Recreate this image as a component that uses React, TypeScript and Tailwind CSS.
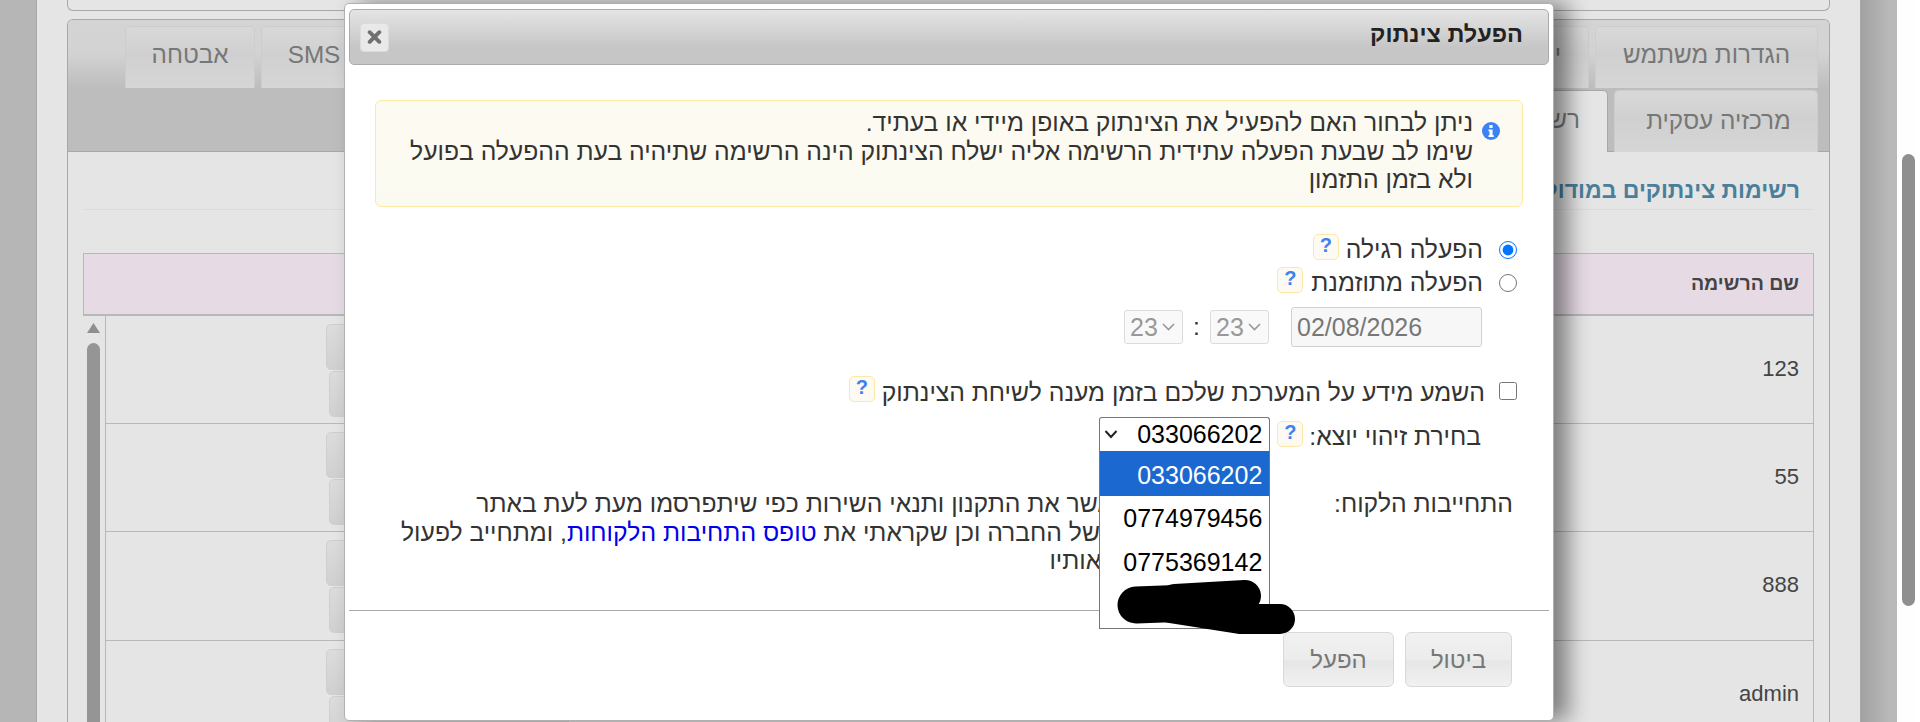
import React from "react";

const tabCls =
  "shrink-0 rounded-t-[5px] border border-b-0 border-[#cdcdcd] bg-[linear-gradient(#d8d8d8,#d0d0d0_45%,#d6d6d6)] text-[#777] text-[24.3px] flex items-center justify-center";

function Help({ className = "" }: { className?: string }) {
  return (
    <span
      className={
        "shrink-0 w-[26px] h-[26px] rounded-[5px] border border-[#fbe9a4] bg-[#fcfaf2] flex items-start justify-center text-[#3c82f0] text-[20px] font-bold leading-[21px] " +
        className
      }
    >
      ?
    </span>
  );
}

function RowButtons() {
  return (
    <div className="w-[240px] flex flex-col items-start gap-[1px] pt-[8px]">
      <div className="w-[240px] h-[46px] rounded-[5px] border border-[#cfcfcf] bg-[linear-gradient(#dcdcdc,#d0d0d0)]" />
      <div className="ml-[3px] w-[240px] h-[46px] rounded-[5px] border border-[#cfcfcf] bg-[linear-gradient(#dcdcdc,#d0d0d0)]" />
    </div>
  );
}

function TableRow({ name, h }: { name: string; h: string }) {
  return (
    <div className={"flex border-b border-[#b8b8b8] " + h} dir="ltr">
      <div className="flex-1 pl-[220px]">
        <RowButtons />
      </div>
      <div className="w-[200px] pr-[14px] text-right text-[22px] text-[#444] flex items-center justify-end pb-[3px]">
        {name}
      </div>
    </div>
  );
}

function Background() {
  return (
    <div className="w-[1897px] h-full bg-[linear-gradient(90deg,#b6b6b6_0,#b6b6b6_1861px,#a2a2a2_1861px,#b9b9b9_1890px)] pl-[36px] pr-[36px] shrink-0">
      <div className="w-[1825px] h-full border-x border-[#a8a8a8] bg-[#e5e5e5] pl-[30px] pr-[30px]">
        <div className="h-[11px] rounded-b-[6px] border border-t-0 border-[#a8a8a8]" />
        <div className="mt-[8px] h-[703px] rounded-t-[6px] border border-b-0 border-[#a8a8a8] overflow-hidden" dir="rtl">
          <div className="h-[132px] border-b border-[#a8a8a8] bg-[linear-gradient(#d4d4d4,#d3d3d3_25%,#bdbdbd_52%,#bdbdbd)] pr-[11px] pt-[6px]">
            <div className="flex gap-[6px] h-[62px]">
              <div className={tabCls + " w-[223px] pb-[4px]"}>הגדרות משתמש</div>
              <div className={tabCls + " w-[230px] pb-[4px] justify-start pr-[27px]"}>יומן</div>
              <div className={tabCls + " w-[980px] pb-[4px]"}></div>
              <div className={tabCls + " w-[106px] pb-[4px]"}>SMS</div>
              <div className={tabCls + " w-[130px] pb-[4px]"}>אבטחה</div>
            </div>
            <div className="flex gap-[6px] h-[62px] mt-[2px]">
              <div className={tabCls + " w-[204px] pl-[5px]"}>מרכזיה עסקית</div>
              <div className="w-[300px] h-[62px] rounded-t-[5px] border border-b-0 border-[#a8a8a8] bg-[#e5e5e5] text-[#777] text-[24.3px] flex items-center pr-[27px] pb-[3px]">
                רשימות צינתוקים
              </div>
            </div>
          </div>
          <div className="px-[15px]">
            <div className="h-[58px] border-b border-[#dedfc8] flex items-center pr-[14px] pt-[20px] text-[#4a7f9b] text-[23px] font-bold">
              רשימות צינתוקים במודול
            </div>
            <div className="mt-[43px] h-[63px] border border-b-2 border-[#b8b8b8] bg-[#e6dbe5] flex items-center pr-[14px] text-[#444] text-[19.5px] font-bold">
              שם הרשימה
            </div>
            <div className="flex">
              <div className="flex-1 border-x border-[#b8b8b8] ml-[22px]">
                <TableRow name="123" h="h-[108px]" />
                <TableRow name="55" h="h-[108px]" />
                <TableRow name="888" h="h-[109px]" />
                <TableRow name="admin" h="h-[108px]" />
              </div>
              <div className="absolute left-[87px] top-[316px] w-[13px] h-[406px] flex flex-col items-center">
                <svg width="13" height="12" viewBox="0 0 13 12" className="mt-[6px]">
                  <path d="M6.5 1 L13 11 L0 11 Z" fill="#8f8f8f" strokeLinejoin="round" />
                </svg>
                <div className="mt-[9px] w-[13px] flex-1 rounded-t-[7px] bg-[#959595]" />
              </div>
            </div>
          </div>
        </div>
      </div>
    </div>
  );
}

function Modal() {
  return (
    <div
      dir="rtl"
      className="absolute left-[344px] top-[3px] w-[1210px] h-[718px] rounded-[5px] bg-white border border-[#b0b0b0] shadow-[14px_0_22px_rgba(0,0,0,0.45)] px-[4px] pt-[5px] text-[24.7px] text-[#333]"
    >
      <div className="h-[56px] rounded-[5px] border border-[#ababab] bg-[linear-gradient(#e4e4e4,#c6c6c6_70%,#c6c6c6)] flex items-center justify-between pr-[25px] pl-[10px] pb-[4px]">
        <span className="font-bold text-[#222] text-[23.5px]">הפעלת צינתוק</span>
        <span className="w-[29px] h-[29px] rounded-[4px] bg-[#e9e9e9] border border-[#dcdcdc] flex items-center justify-center mt-[4px]">
          <svg width="15" height="16" viewBox="0 0 14 14">
            <path d="M2.5 2.5 L11.5 11.5 M11.5 2.5 L2.5 11.5" stroke="#707070" strokeWidth="3.6" strokeLinecap="round" />
          </svg>
        </span>
      </div>

      <div className="mt-[35px] mx-[26px] h-[107px] rounded-[6px] border border-[#fcea9f] bg-[linear-gradient(#fdfaf1,#fbfaf2)] flex items-start pr-[22px] pt-[8px] leading-[28.5px]">
        <svg width="18" height="18" viewBox="0 0 18 18" className="shrink-0 mt-[13px]">
          <circle cx="9" cy="9" r="9" fill="#3b82f6" />
          <rect x="7.4" y="3" width="3.2" height="3" fill="#fff" />
          <path d="M6.5 7.5 H10.6 V13.2 H11.8 V15 H6.5 V13.2 H7.5 V9.2 H6.5 Z" fill="#fff" />
        </svg>
        <div className="mr-[9px]">
          ניתן לבחור האם להפעיל את הצינתוק באופן מיידי או בעתיד.
          <br />
          שימו לב שבעת הפעלה עתידית הרשימה אליה ישלח הצינתוק הינה הרשימה שתיהיה בעת ההפעלה בפועל
          <br />
          ולא בזמן התזמון
        </div>
      </div>

      <div className="mr-[32px] mt-[26px]">
        <div className="h-[33px] flex items-center">
          <input type="radio" readOnly checked className="w-[18px] h-[18px] m-0 accent-[#0075ff]" />
          <span className="mr-[16px]">הפעלה רגילה</span>
          <Help className="mr-[7px] -mt-[5px]" />
        </div>
        <div className="h-[33px] flex items-center">
          <input type="radio" readOnly checked={false} className="w-[18px] h-[18px] m-0" />
          <span className="mr-[16px]">הפעלה מתוזמנת</span>
          <Help className="mr-[8px] -mt-[5px]" />
        </div>
        <div className="mt-[8px] h-[40px] mr-[35px] flex items-center text-[#777]">
          <div dir="ltr" className="w-[191px] h-[40px] rounded-[3px] border border-[#d0d0d0] bg-[#f7f7f7] text-[25px] pl-[5px] leading-[38px]">
            02/08/2026
          </div>
          <div className="mr-[22px] w-[59px] h-[34px] rounded-[3px] border border-[#dcdcdc] bg-[#f9f9f9] text-[25px] text-[#999] flex items-center justify-between pl-[5px] pr-[7px] leading-none" dir="ltr">
            23
            <svg width="13" height="8" viewBox="0 0 13 8"><path d="M1 1 L6.5 6.5 L12 1" fill="none" stroke="#999" strokeWidth="1.6" /></svg>
          </div>
          <span className="w-[27px] text-center text-[#333]">:</span>
          <div className="w-[59px] h-[34px] rounded-[3px] border border-[#dcdcdc] bg-[#f9f9f9] text-[25px] text-[#999] flex items-center justify-between pl-[5px] pr-[7px] leading-none" dir="ltr">
            23
            <svg width="13" height="8" viewBox="0 0 13 8"><path d="M1 1 L6.5 6.5 L12 1" fill="none" stroke="#999" strokeWidth="1.6" /></svg>
          </div>
        </div>

        <div className="mt-[27px] h-[34px] flex items-center">
          <input type="checkbox" readOnly className="w-[18px] h-[18px] m-0" />
          <span className="mr-[14px] pt-[3px]">השמע מידע על המערכת שלכם בזמן מענה לשיחת הצינתוק</span>
          <Help className="mr-[7px] -mt-[5px]" />
        </div>

        <div className="mt-[9px] h-[34px] flex items-center">
          <span className="mr-[36px] pt-[6px]">בחירת זיהוי יוצא:</span>
          <Help className="mr-[6px] -mt-[1px]" />
          <div className="relative mr-[7px] w-[171px] h-[34px] rounded-t-[3px] border border-b-0 border-[#767676] bg-white text-[25px] text-black" dir="ltr">
            <div className="h-full flex items-center justify-between pl-[4px] pr-[7px] leading-none">
              <svg width="14" height="9" viewBox="0 0 14 9"><path d="M1.5 1 L7 7 L12.5 1" fill="none" stroke="#222" strokeWidth="2" /></svg>
              033066202
            </div>
            <div className="absolute left-[-1px] top-full w-[171px] h-[178px] border border-t-0 border-[#767676] bg-white z-10 text-right leading-none">
              <div className="h-[45px] bg-[#1a68d0] text-white flex items-center justify-end pr-[7px] pt-[3px]">033066202</div>
              <div className="h-[44px] flex items-center justify-end pr-[7px]">0774979456</div>
              <div className="h-[45px] flex items-center justify-end pr-[7px]">0775369142</div>
            </div>
          </div>
        </div>

        <div className="mt-[39px] mr-[4px] h-[84px] flex">
          <span className="w-[247px] shrink-0 leading-[28.5px]">התחייבות הלקוח:</span>
          <div className="leading-[28.5px] whitespace-nowrap -mr-[2px]">
            כי קראתי אני מאשר את התקנון ותנאי השירות כפי שיתפרסמו מעת לעת באתר
            <br />
            ואתר האינטרנט של החברה וכן שקראתי את <span className="text-[#0000ee]">טופס התחיבות הלקוחות</span>, ומתחייב לפעול
            <br />
            בהתאם לכל הוראותיו
          </div>
        </div>
      </div>

      <div className="mt-[36px] h-[1px] bg-[#aaaaaa]" />
      <div className="flex pr-[37px] mt-[21px] gap-[11px] text-[#777] text-[24px]">
        <div className="w-[107px] h-[55px] rounded-[6px] border border-[#d8d8d8] bg-[linear-gradient(#f1f1f1,#ececec_50%,#e6e6e6_52%,#f1f1f1)] flex items-center justify-center">ביטול</div>
        <div className="w-[111px] h-[55px] rounded-[6px] border border-[#d8d8d8] bg-[linear-gradient(#f1f1f1,#ececec_50%,#e6e6e6_52%,#f1f1f1)] flex items-center justify-center">הפעל</div>
      </div>
    </div>
  );
}

export default function App() {
  return (
    <div className="relative h-[722px] w-full overflow-hidden bg-white flex font-['Liberation_Sans',Arial,sans-serif]">
      <Background />
      <div className="w-[18px] h-full shrink-0 bg-[#fefefe] pl-[5px] pt-[154px]">
        <div className="w-[13px] h-[452px] rounded-[7px] bg-[#8f8f8f]" />
      </div>
      <Modal />
      <svg className="absolute left-[1100px] top-[570px] z-20" width="210" height="75" viewBox="1100 570 210 75">
        <g fill="none" stroke="#000" strokeLinecap="round" strokeLinejoin="round">
          <path d="M1136 605 L1190 603" strokeWidth="37" />
          <path d="M1175 600 L1245 596" strokeWidth="32" />
          <path d="M1170 608 L1240 619 L1280 619" strokeWidth="30" />
        </g>
      </svg>
    </div>
  );
}
